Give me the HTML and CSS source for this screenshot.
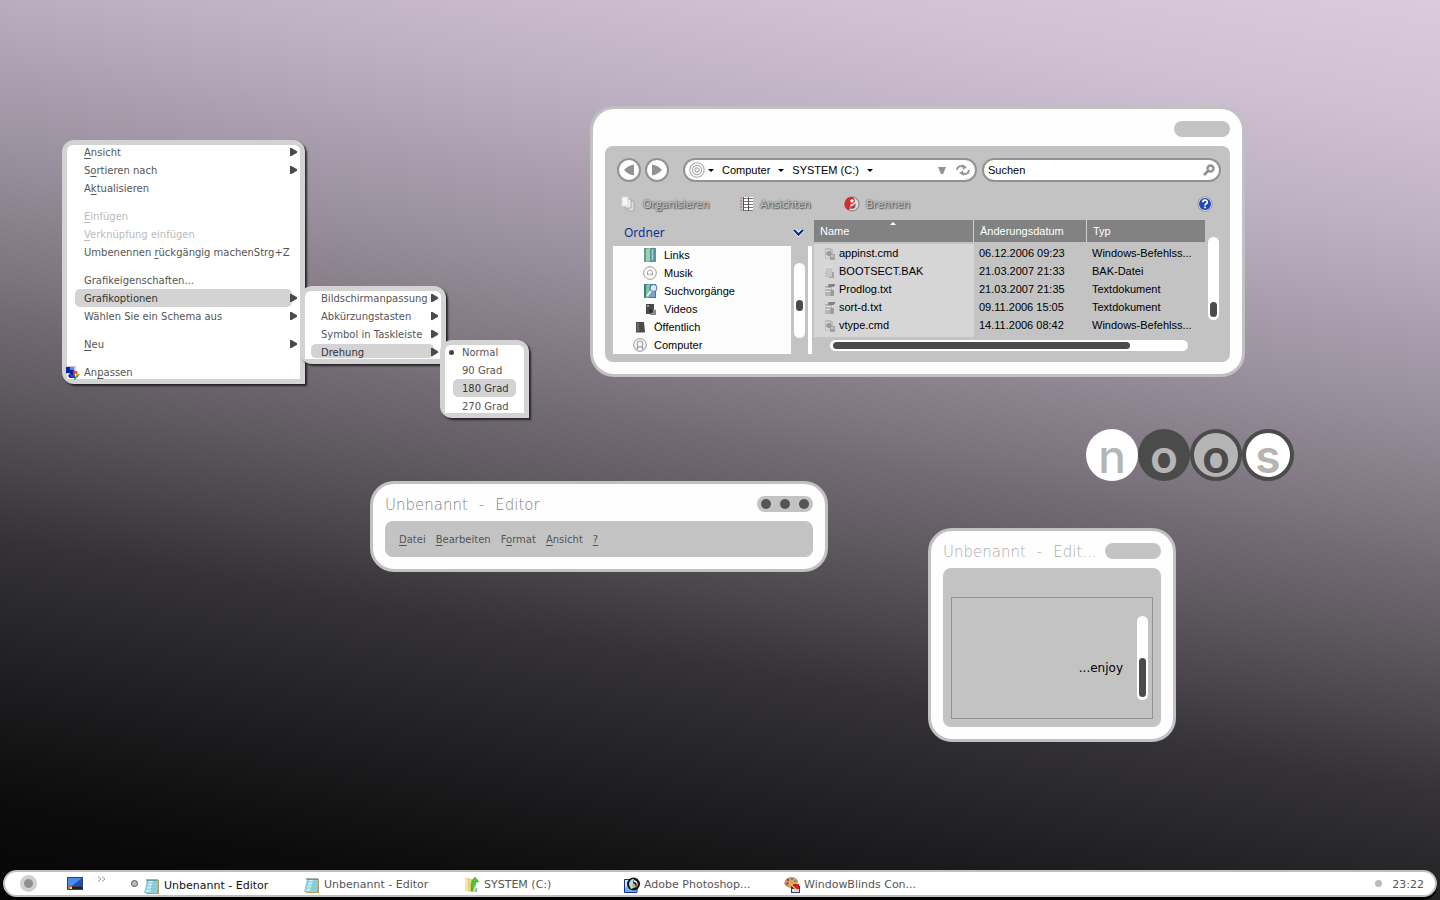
FILE: index.html
```html
<!DOCTYPE html>
<html lang="de">
<head>
<meta charset="utf-8">
<title>Desktop</title>
<link rel="stylesheet" href="styles.css">
</head>
<body>
<svg class="defs" aria-hidden="true">
  <symbol id="arrow" viewBox="0 0 7 8"><path d="M0 0H1.500L7 3.200V4.800L1.500 8H0Z"/></symbol>
  <symbol id="drop" viewBox="0 0 6 3"><path d="M0 0H6L3 3Z"/></symbol>
  <symbol id="notepad" viewBox="0 0 16 16">
    <path d="M4 2H15V16H2Z" fill="#b99b62"/>
    <path d="M3 2H14L13 15H0Z" fill="#8fd0dd"/>
    <path d="M5 3H9L6 14H2Z" fill="#c9edf3"/>
    <path d="M3 5H13M2 8H13M2 11H12" stroke="#6db9c9" stroke-width=".6"/>
    <path d="M3 1V3M5 1V3M7 1V3M9 1V3M11 1V3M13 1V3" stroke="#45616a"/>
  </symbol>
  <symbol id="file" viewBox="0 0 12 14">
    <path d="M1 1H8V11H1Z" fill="#dcdcdc"/><path d="M2 3H8V12H1V8Z" fill="#c4c4c4"/><path d="M8 7H10V13H5V12H8Z" fill="#a4a4a4"/>
  </symbol>
  <symbol id="cmdfile" viewBox="0 0 12 14">
    <path d="M1 1H7L9 3V12H1Z" fill="#bdbdbd"/><path d="M2 3H6V5H2ZM2 8H5V10H2Z" fill="#d9d9d9"/><circle cx="5" cy="6.500" r="2.500" fill="#999"/><path d="M6 7H11V13H6Z" fill="#a2a2a2"/><path d="M7 9H10M2 11H6" stroke="#ddd"/>
  </symbol>
  <symbol id="txtfile" viewBox="0 0 12 14">
    <path d="M1 3H8V13H1Z" fill="#b5b5b5"/><path d="M5 1H11V3H10V4H4V2Z" fill="#858585"/><path d="M1 5.500H7M1 8.500H6" stroke="#dedede"/><path d="M7 7H10V13H6Z" fill="#9c9c9c"/>
  </symbol>
</svg>

<main class="desktop">

<nav class="menu menu-main" aria-label="Desktop">
  <ul>
    <li><button><span><u>A</u>nsicht</span><svg class="arrow"><use href="#arrow"/></svg></button></li>
    <li><button><span>S<u>o</u>rtieren nach</span><svg class="arrow"><use href="#arrow"/></svg></button></li>
    <li><button><span>A<u>k</u>tualisieren</span></button></li>
    <li class="group"><button disabled><span><u>E</u>infügen</span></button></li>
    <li><button disabled><span><u>V</u>erknüpfung einfügen</span></button></li>
    <li><button><span>Umbenennen <u>r</u>ückgängig machen</span><kbd>Strg+Z</kbd></button></li>
    <li class="group"><button><span>Grafikeigenschaften...</span></button></li>
    <li><button class="active"><span>Grafikoptionen</span><svg class="arrow"><use href="#arrow"/></svg></button></li>
    <li><button><span>Wählen Sie ein Schema aus</span><svg class="arrow"><use href="#arrow"/></svg></button></li>
    <li class="group"><button><span><u>N</u>eu</span><svg class="arrow"><use href="#arrow"/></svg></button></li>
    <li class="group"><button>
      <svg class="menu-icon" viewBox="0 0 16 14"><path d="M0 0H11V8H0Z" fill="#c5cde8"/><path d="M1 1H9V7H1Z" fill="#0a1ea8"/><path d="M5 1H9V4H5Z" fill="#5f82e6"/><path d="M3 10L7 5L11 12H5Z" fill="#151b50"/><path d="M7 5H11L10 9Z" fill="#e51b8b"/><path d="M11 5L13 6L11 10Z" fill="#f42a18"/><path d="M12 6L15 8L11 11Z" fill="#ffd51b"/><path d="M12 9L15 8L12 12L10 11Z" fill="#33b53a"/><path d="M5 8L10 9L9 12L5 11Z" fill="#2448d8"/><path d="M9 11L12 13L9 14Z" fill="#888"/></svg>
      <span>An<u>p</u>assen</span></button></li>
  </ul>
</nav>

<nav class="menu menu-sub" aria-label="Grafikoptionen">
  <ul>
    <li><button><span>Bildschirmanpassung</span><svg class="arrow"><use href="#arrow"/></svg></button></li>
    <li><button><span>Abkürzungstasten</span><svg class="arrow"><use href="#arrow"/></svg></button></li>
    <li><button><span>Symbol in Taskleiste</span><svg class="arrow"><use href="#arrow"/></svg></button></li>
    <li><button class="active"><span>Drehung</span><svg class="arrow"><use href="#arrow"/></svg></button></li>
  </ul>
</nav>

<nav class="menu menu-rotation" aria-label="Drehung">
  <ul>
    <li><button class="checked"><span>Normal</span></button></li>
    <li><button><span>90 Grad</span></button></li>
    <li><button class="active"><span>180 Grad</span></button></li>
    <li><button><span>270 Grad</span></button></li>
  </ul>
</nav>

<section class="window explorer" aria-label="SYSTEM (C:)">
  <header class="titlebar"><div class="pill"></div></header>
  <div class="panel">
    <div class="navrow">
      <button class="round" aria-label="Zurück"><svg viewBox="0 0 12 12"><path d="M11 0.500C7 1 3 3.500 1 6C3 8.500 7 11 11 11.500Z"/></svg></button>
      <button class="round" aria-label="Vorwärts"><svg viewBox="0 0 12 12"><path d="M1 0.500C5 1 9 3.500 11 6C9 8.500 5 11 1 11.500Z"/></svg></button>
      <div class="address">
        <svg class="disc" viewBox="0 0 14 14"><circle cx="7" cy="7" r="6.300"/><circle cx="7" cy="7" r="4"/><circle cx="7" cy="7" r="1.800"/></svg>
        <svg class="drop"><use href="#drop"/></svg>
        <button>Computer</button><svg class="drop"><use href="#drop"/></svg>
        <button>SYSTEM (C:)</button><svg class="drop"><use href="#drop"/></svg>
        <button class="history" aria-label="Verlauf"><svg viewBox="0 0 8 7"><path d="M0 0H8L5 7H3Z"/></svg></button>
        <button aria-label="Aktualisieren"><svg class="refresh" viewBox="0 0 14 12"><path d="M1 6C1 2.500 4 1.500 7 2.500M13 6C13 9.500 10 10.500 7 9.500" fill="none" stroke="#999" stroke-width="2"/><path d="M6 0L11 3L7 6ZM8 12L3 9L7 6.500Z" fill="#999"/></svg></button>
      </div>
      <label class="search"><input type="text" value="Suchen" aria-label="Suchen"><svg viewBox="0 0 12 12"><circle cx="7.500" cy="4.500" r="3" fill="none" stroke="#929292" stroke-width="2.400"/><path d="M5 7L1 11" stroke="#929292" stroke-width="2.800"/></svg></label>
    </div>
    <div class="toolbar">
      <button class="organise"><svg viewBox="0 0 16 16"><path d="M7 5H13V15H7Z" fill="#ddd" stroke="#aaa"/><path d="M4 3H10V12H4Z" fill="#eee" stroke="#aaa"/><path d="M1 1H7V10H1Z" fill="#f2f8fc" stroke="#d4dce0"/></svg><span>Organisieren</span></button>
      <button class="views"><svg viewBox="0 0 16 16"><path d="M5 1H15V15H5Z" fill="#fff"/><path d="M5 2.500H15M5 5.500H15M5 8.500H15M5 11.500H15M5 14.500H15" stroke="#777"/><path d="M5.500 1V15M10.500 1V15" stroke="#555"/><path d="M2 2H4M2 5H4M2 8H4M2 11H4M2 14H4" stroke="#b66"/></svg><span>Ansichten</span></button>
      <button class="burn"><svg viewBox="0 0 16 16"><circle cx="8" cy="8" r="7" fill="#ddd" stroke="#777"/><path d="M8 1A7 7 0 0 0 4 14C8 13 5 10 7 8C12 8 12 3 8 1Z" fill="#d92a2a"/><circle cx="8" cy="5" r="1.700" fill="#fff"/><path d="M5 11C8 13 11 11 11 8" fill="none" stroke="#777" stroke-width="2"/><circle cx="9" cy="11" r="1.500" fill="#c22"/></svg><span>Brennen</span></button>
      <button class="help" aria-label="Hilfe"><svg viewBox="0 0 16 16"><circle cx="8" cy="8" r="7.500" fill="#777"/><circle cx="8" cy="8" r="6.900" fill="#ddd"/><circle cx="8" cy="8" r="6" fill="#2147b4"/><path d="M5.800 6.300C5.800 3.500 10.300 3.500 10.300 6.200C10.300 7.800 8 7.700 8 9.500M8 10.600V12.300" fill="none" stroke="#fff" stroke-width="1.700"/></svg></button>
    </div>
    <div class="content">
      <aside class="folders">
        <button class="folders-head"><span>Ordner</span><svg viewBox="0 0 11 8"><path d="M1 1L5.500 5.500L10 1" fill="none" stroke="#fff" stroke-width="4"/><path d="M1 1L5.500 5.500L10 1" fill="none" stroke="#0a3296" stroke-width="2.400"/></svg></button>
        <div class="folders-body">
          <ul class="tree">
            <li><svg viewBox="0 0 16 16"><path d="M2 1H14V15H2Z" fill="#5d9d8b"/><path d="M4 2L8 1V14L4 15Z" fill="#9bd0b3"/><path d="M9 2L12 1V13L9 15Z" fill="#a5cad8" stroke="#547f91"/></svg>Links</li>
            <li><svg viewBox="0 0 16 16"><circle cx="8" cy="8" r="6.300" fill="#fff" stroke="#999"/><path d="M5.500 10V7.500C5.500 4.500 10.500 4.500 10.500 7.500V10M7 10.500V8.500M9 10.500V8.500" fill="none" stroke="#999"/></svg>Musik</li>
            <li><svg viewBox="0 0 16 16"><path d="M2 1H14V15H2Z" fill="#3c7f84"/><path d="M4 2L8 1V14L4 15Z" fill="#80c69e"/><path d="M7 3H13V14H7Z" fill="#7da0cf"/><circle cx="11.500" cy="5" r="3.500" fill="#d9ecff" stroke="#5577a5"/><path d="M9 8L5 13" stroke="#e3edf5" stroke-width="2"/></svg>Suchvorgänge</li>
            <li><svg viewBox="0 0 16 16"><path d="M4 3H12V13H4Z" fill="#4a4a4a"/><path d="M5 4H7V6H5Z" fill="#999"/><path d="M10 8L14 9V14H8Z" fill="#888"/><circle cx="9" cy="10" r="2" fill="#2d2d2d"/></svg>Videos</li>
            <li class="top"><svg viewBox="0 0 16 16"><path d="M4 3H12L13 13H4Z" fill="#4b4b4b"/><path d="M5 4H7V12H5Z" fill="#6e6e6e"/><path d="M4 13.500H13" stroke="#aaa"/></svg>Öffentlich</li>
            <li class="top"><svg viewBox="0 0 16 16"><circle cx="8" cy="8" r="6.300" fill="#f5f5f5" stroke="#999"/><circle cx="8" cy="7" r="3" fill="none" stroke="#999"/><path d="M6 9.500L5 12.500M10 9.500L11 12.500" stroke="#999" stroke-width="1.500"/></svg>Computer</li>
          </ul>
          <div class="scroll scroll-tree"><div class="thumb"></div></div>
        </div>
      </aside>
      <div class="files">
        <table>
          <colgroup><col class="col-name"><col class="col-date"><col class="col-type"></colgroup>
          <thead><tr><th class="sorted">Name</th><th>Änderungsdatum</th><th>Typ</th></tr></thead>
          <tbody>
            <tr><td><svg><use href="#cmdfile"/></svg>appinst.cmd</td><td>06.12.2006 09:23</td><td>Windows-Befehlss...</td></tr>
            <tr><td><svg><use href="#file"/></svg>BOOTSECT.BAK</td><td>21.03.2007 21:33</td><td>BAK-Datei</td></tr>
            <tr><td><svg><use href="#txtfile"/></svg>Prodlog.txt</td><td>21.03.2007 21:35</td><td>Textdokument</td></tr>
            <tr><td><svg><use href="#txtfile"/></svg>sort-d.txt</td><td>09.11.2006 15:05</td><td>Textdokument</td></tr>
            <tr><td><svg><use href="#cmdfile"/></svg>vtype.cmd</td><td>14.11.2006 08:42</td><td>Windows-Befehlss...</td></tr>
          </tbody>
        </table>
        <div class="scroll scroll-h"><div class="thumb"></div></div>
      </div>
      <div class="scroll scroll-files"><div class="thumb"></div></div>
    </div>
  </div>
</section>

<section class="window editor" aria-label="Unbenannt - Editor">
  <header class="titlebar"><h2><span>Unbenannt</span> <span>-</span> <span>Editor</span></h2>
    <div class="pill"><button aria-label="Minimieren"></button><button aria-label="Maximieren"></button><button aria-label="Schließen"></button></div></header>
  <nav class="panel menubar">
    <button><u>D</u>atei</button><button><u>B</u>earbeiten</button><button>F<u>o</u>rmat</button><button><u>A</u>nsicht</button><button><u>?</u></button>
  </nav>
</section>

<section class="window note" aria-label="Unbenannt - Editor, klein">
  <header class="titlebar"><h2><span>Unbenannt</span> <span>-</span> <span>Edit...</span></h2><div class="pill"></div></header>
  <div class="panel">
    <div class="notebox">
      <textarea aria-label="Text">...enjoy</textarea>
      <div class="scroll scroll-note"><div class="thumb"></div></div>
    </div>
  </div>
</section>

<div class="logo" aria-label="noos"><span class="l1">n</span><span class="l2">o</span><span class="l3">o</span><span class="l4">s</span></div>

</main>

<footer class="taskbar">
  <button class="start" aria-label="Start"></button>
  <button class="show" aria-label="Desktop anzeigen"><svg viewBox="0 0 16 13"><path d="M0 0H16V13H0Z" fill="#3a4258"/><path d="M1 1H15V9H1Z" fill="#1c4fc0"/><path d="M1 1H15L5 9H1Z" fill="#4b8cec"/><path d="M5 10H15V12H5Z" fill="#222"/><circle cx="3" cy="10" r="2" fill="#e9542a"/><path d="M3 10H5V12H3Z" fill="#ffd23b"/><path d="M1 10H3V12H1Z" fill="#3ca0f5"/></svg></button>
  <button class="more" aria-label="Mehr"><svg viewBox="0 0 9 6"><path d="M1 .500L4 3L1 5.500M5 .500L8 3L5 5.500" fill="none" stroke="#999"/></svg></button>
  <i class="dot current"></i>
  <nav class="tasks">
    <button class="active"><svg><use href="#notepad"/></svg>Unbenannt - Editor</button>
    <button><svg><use href="#notepad"/></svg>Unbenannt - Editor</button>
    <button><svg viewBox="0 0 16 16"><path d="M1 1H5L6 2H11V15L1 14Z" fill="#e3cb76"/><path d="M1 2L4 1V14L1 14Z" fill="#f5e7a5"/><path d="M5 3L12 2V15L5 15Z" fill="#efd98a"/><path d="M7 14V8C7 6 8 5 9 5H7L11 0L15 5H12C12 8 9 9 9 14Z" fill="#4cc53c" stroke="#2d9d27" stroke-width=".5"/><path d="M12 11H13V15H11Z" fill="#5bc3ea"/></svg>SYSTEM (C:)</button>
    <button><svg viewBox="0 0 16 16"><path d="M.500 2.500H13V15.500H.500Z" fill="#63b7ea" stroke="#1b2d9d"/><path d="M1 3H5V7L1 11Z" fill="#c8efff"/><circle cx="9.500" cy="7" r="6.500" fill="#111"/><path d="M5 8C5 3 8 2 10 2L9 6L12 10L7 12Z" fill="#a8dff5"/><path d="M10 3C14 4 15 8 12 11C14 7 12 5 10 5Z" fill="#fff"/><path d="M8 8L10 6L12 9L9 11Z" fill="#dca25a"/></svg>Adobe Photoshop...</button>
    <button><svg viewBox="0 0 16 16"><path d="M1 5C2 0 10 -1 13 3C15 7 11 6 11 9C11 11 8 11 5 10C2 9 0 8 1 5Z" fill="#d9a766" stroke="#9b6428" stroke-width=".6"/><circle cx="4" cy="3" r="1.200" fill="#d92d2d"/><circle cx="8" cy="2" r="1.100" fill="#4577d4"/><circle cx="11" cy="4" r="1.100" fill="#3aa545"/><circle cx="3.500" cy="6.500" r="1.200" fill="#7c3ba5"/><path d="M7 9H16V16H7Z" fill="#27388f"/><path d="M9 7H15V12H9Z" fill="#c92323"/><path d="M8 12H15V15H8Z" fill="#dce6f5"/><path d="M5 6L14 14" stroke="#f0b733" stroke-width="1.400"/></svg>WindowBlinds Con...</button>
  </nav>
  <i class="dot tray"></i>
  <time>23:22</time>
</footer>
</body>
</html>
```
FILE: styles.css
```css
* { box-sizing: border-box; }

html, body { height: 100%; }

body {
  margin: 0;
  display: flex;
  flex-direction: column;
  overflow: hidden;
  font: 11px/18px "DejaVu Sans", Verdana, sans-serif;
  color: #555;
  background: linear-gradient(10deg, #060606 0%, #0b0b0b 8%, #1a191b 17%, #343236 31%, #524d53 40%, #6a636b 48%, #968c99 63%, #bfb1c4 80%, #cfc1d2 90%, #d9cbdc 100%);
}

button, input, textarea {
  margin: 0;
  padding: 0;
  border: 0;
  background: none;
  font: inherit;
  color: inherit;
}

ul { list-style: none; margin: 0; padding: 0; }
u { text-underline-offset: 2px; }
svg { flex: none; }
.defs { position: absolute; width: 0; height: 0; }
.desktop { position: relative; flex: 1; }

/* Context menus */
.menu {
  position: absolute;
  padding: 3px 0;
  font-size: 10px;
  background: #d3d3d3;
  border-radius: 12px 12px 0 12px;
  box-shadow: 2px 2px 2px rgba(20, 18, 22, .8);
}
.menu::before {
  content: "";
  position: absolute;
  inset: 5px;
  background: #fff;
  border-radius: 6px 6px 0 0;
}
.menu ul { position: relative; }
.menu .group { margin-top: 10px; }
.menu button {
  position: relative;
  display: flex;
  align-items: center;
  width: 100%;
  height: 18px;
  padding: 2px 20px 0 22px;
  line-height: 16px;
  text-align: left;
  white-space: nowrap;
}
.menu button:disabled { color: #bbb; }
.menu button span { position: relative; }
.menu button.active { color: #333; }
.menu button.active::before {
  content: "";
  position: absolute;
  inset: 0 13px;
  background: #d3d3d3;
  border-radius: 5px;
}
.menu kbd { margin-left: auto; font: inherit; }
.menu .arrow {
  position: absolute;
  right: 8px;
  top: 5px;
  width: 7px;
  height: 8px;
  fill: #4a4a4a;
}
.menu-icon { position: absolute; left: 3px; top: 3px; width: 16px; height: 14px; }
.menu-main { left: 62px; top: 140px; width: 243px; }
.menu-sub { left: 300px; top: 286px; width: 146px; }
.menu-sub button { padding: 2px 10px 0 21px; }
.menu-sub button.active::before { inset: 1px 12px 3px 11px; }
.menu-rotation { left: 440px; top: 340px; width: 89px; }
.menu-rotation .checked::before {
  content: "";
  position: absolute;
  left: 9px;
  top: 7px;
  width: 5px;
  height: 5px;
  border-radius: 50%;
  background: #444;
}

/* Windows */
.window {
  position: absolute;
  padding: 0 12px 12px;
  background: #fefefe;
  border: 3px solid #c1c1c1;
  border-radius: 24px;
}
.titlebar {
  display: flex;
  align-items: flex-start;
  justify-content: space-between;
  height: 37px;
  padding-top: 12px;
}
.titlebar h2 {
  display: flex;
  gap: 11px;
  margin: 0;
  font-size: 15px;
  line-height: 18px;
  font-weight: 200;
  color: #808080;
}
.pill {
  display: flex;
  align-items: center;
  justify-content: space-between;
  width: 56px;
  height: 16px;
  margin-left: auto;
  padding: 0 4px;
  border-radius: 8px;
  background: #c3c3c3;
}
.pill button { width: 10px; height: 10px; border-radius: 50%; background: #555; }
.panel { background: #c3c3c3; border-radius: 8px; }

.scroll { position: relative; border-radius: 6px; background: #fff; }
.thumb { border-radius: 4px; background: #4b4b4b; }

/* Explorer */
.explorer {
  left: 590px;
  top: 106px;
  width: 655px;
  font-family: "Liberation Sans", Arial, sans-serif;
  color: #000;
}
.explorer .panel { padding: 12px 9px 8px 8px; }
.navrow { display: flex; height: 24px; padding-left: 4px; }
.round {
  display: flex;
  align-items: center;
  justify-content: center;
  width: 24px;
  height: 24px;
  margin-right: 4px;
  border: 2px solid #929292;
  border-radius: 50%;
  background: #fff;
}
.round svg { width: 12px; height: 12px; fill: #929292; }
.address, .search {
  display: flex;
  align-items: center;
  height: 24px;
  border: 2px solid #929292;
  border-radius: 12px;
  background: #fff;
}
.address { width: 294px; margin: 0 5px 0 10px; padding: 0 5px 0 4px; }
.address button { display: flex; align-items: center; }
.disc { width: 16px; height: 16px; margin-right: 3px; fill: none; stroke: #aaa; }
.drop { width: 6px; height: 3px; margin-right: 8px; }
.address button + .drop { margin-left: 8px; }
.history { margin-left: auto; }
.history svg { width: 8px; height: 7px; fill: #929292; }
.refresh { width: 14px; height: 12px; margin-left: 10px; }
.search { flex: 1; padding: 0 4px; }
.search input { flex: 1; min-width: 0; outline: 0; }
.search svg { width: 12px; height: 12px; }

.toolbar { display: flex; align-items: center; height: 38px; padding: 6px 8px 0; }
.toolbar button {
  display: flex;
  align-items: center;
  font: 11px/18px "Open Sans", "Noto Sans", sans-serif;
  color: #c6c6c6;
  text-shadow: 1px 1px 1px #555, 0 0 2px #666, 0 0 2px #777;
}
.toolbar svg { width: 16px; height: 16px; margin-right: 6px; }
.views { margin-left: 29px; }
.burn { margin-left: 33px; }
.toolbar .help { margin-left: auto; }
.toolbar .help svg { margin: 0; }

.content { display: flex; }
.folders { width: 201px; }
.folders-head {
  display: flex;
  align-items: center;
  justify-content: space-between;
  width: 100%;
  height: 26px;
  padding: 0 10px 0 11px;
  font: 12px/18px "Noto Sans", "Open Sans", sans-serif;
  color: #0a3296;
}
.folders-head svg { width: 11px; height: 8px; }
.folders-body { display: flex; height: 108px; padding-right: 2px; }
.folders-body::after { content: ""; width: 4px; background: #fff; }
.tree { width: 178px; background: #fdfdfd; }
.tree li { display: flex; align-items: center; height: 18px; padding-left: 29px; }
.tree li.top { padding-left: 19px; }
.tree svg { width: 16px; height: 16px; margin-right: 6px; }
.scroll-tree { width: 11px; height: 75px; margin: 17px 3px 0; padding: 37px 2px 0; }
.scroll-tree .thumb { height: 11px; }

.files { width: 391px; }
table { width: 100%; table-layout: fixed; border-collapse: separate; border-spacing: 0; }
.col-name { width: 160px; }
.col-date { width: 113px; }
th {
  position: relative;
  height: 24px;
  padding: 0 0 0 6px;
  border-bottom: 2px solid #c3c3c3;
  border-right: 1px solid #ccc;
  background: #828282;
  color: #fff;
  font-weight: 400;
  text-align: left;
}
th:last-child { border-right: 0; }
th.sorted::after {
  content: "";
  position: absolute;
  left: 76px;
  top: 2px;
  border: 3px solid transparent;
  border-top: 0;
  border-bottom-color: #fff;
}
td { height: 18px; padding: 0 0 0 5px; line-height: 18px; white-space: nowrap; }
td:first-child { padding-left: 10px; background: #d6d6d6; }
tr:last-child td { padding-bottom: 3px; }
td svg { width: 12px; height: 14px; margin-right: 3px; vertical-align: middle; }
.scroll-h { width: 358px; height: 11px; margin: 3px 0 0 16px; padding: 2px 3px; }
.scroll-h .thumb { width: 297px; height: 7px; }
.scroll-files { width: 11px; height: 83px; margin: 17px 0 0 3px; padding: 65px 2px 0; }
.scroll-files .thumb { height: 15px; }

/* Editors */
.editor { left: 370px; top: 481px; width: 458px; }
.menubar { display: flex; align-items: center; gap: 10px; height: 36px; padding: 2px 14px 0; font-size: 10px; }
.note { left: 928px; top: 528px; width: 248px; }
.note h2 { color: #aaa; }
.note .panel { padding: 29px 8px 8px; }
.notebox { display: flex; height: 122px; border: 1px solid #929292; }
.notebox textarea {
  flex: 1;
  min-width: 0;
  padding: 61px 14px 0 0;
  resize: none;
  overflow: hidden;
  outline: 0;
  font-size: 12px;
  text-align: right;
  color: #000;
}
.scroll-note { width: 11px; height: 84px; margin: 18px 4px 0 0; padding: 42px 2px 0; }
.scroll-note .thumb { height: 39px; }

/* Logo */
.logo { position: absolute; left: 1086px; top: 429px; display: flex; font: 500 46px/54px Inter, sans-serif; }
.logo span { width: 52px; height: 52px; border-radius: 50%; text-align: center; }
.l1 { background: #fff; color: #b5b5b5; }
.l2 { background: #4b4b4b; color: #b5b5b5; }
.l3 { background: #b5b5b5; color: #4b4b4b; }
.l4 { background: #fff; color: #b5b5b5; }
.logo .l3, .logo .l4 { border: 4px solid #4b4b4b; line-height: 46px; }
.logo .l2, .logo .l3, .logo .l4 { font-weight: 600; }

/* Taskbar */
.taskbar {
  display: flex;
  align-items: center;
  height: 27px;
  margin: 0 3px 3px;
  padding: 0 11px 0 15px;
  border: 2px solid #bfbfbf;
  border-radius: 14px;
  background: #fff;
  box-shadow: 0 3px 0 #000;
}
.start { width: 17px; height: 17px; border: 4px solid #d0d0d0; border-radius: 50%; background: #909090; }
.show { width: 16px; height: 13px; margin-left: 30px; }
.show svg, .more svg { display: block; width: 100%; height: 100%; }
.more { align-self: flex-start; width: 9px; height: 6px; margin: 4px 0 0 14px; }
.dot { width: 7px; height: 7px; border-radius: 50%; background: #bbb; }
.current { margin: 0 6px 0 25px; border: 1px solid #555; }
.tasks { display: flex; flex: 1; }
.tasks button { display: flex; align-items: center; width: 160px; padding-top: 2px; white-space: nowrap; }
.tasks .active { padding-top: 4px; color: #111; }
.tasks svg { width: 16px; height: 16px; margin-right: 4px; }
.tray { margin-right: 10px; }
time { padding-top: 2px; }
```
